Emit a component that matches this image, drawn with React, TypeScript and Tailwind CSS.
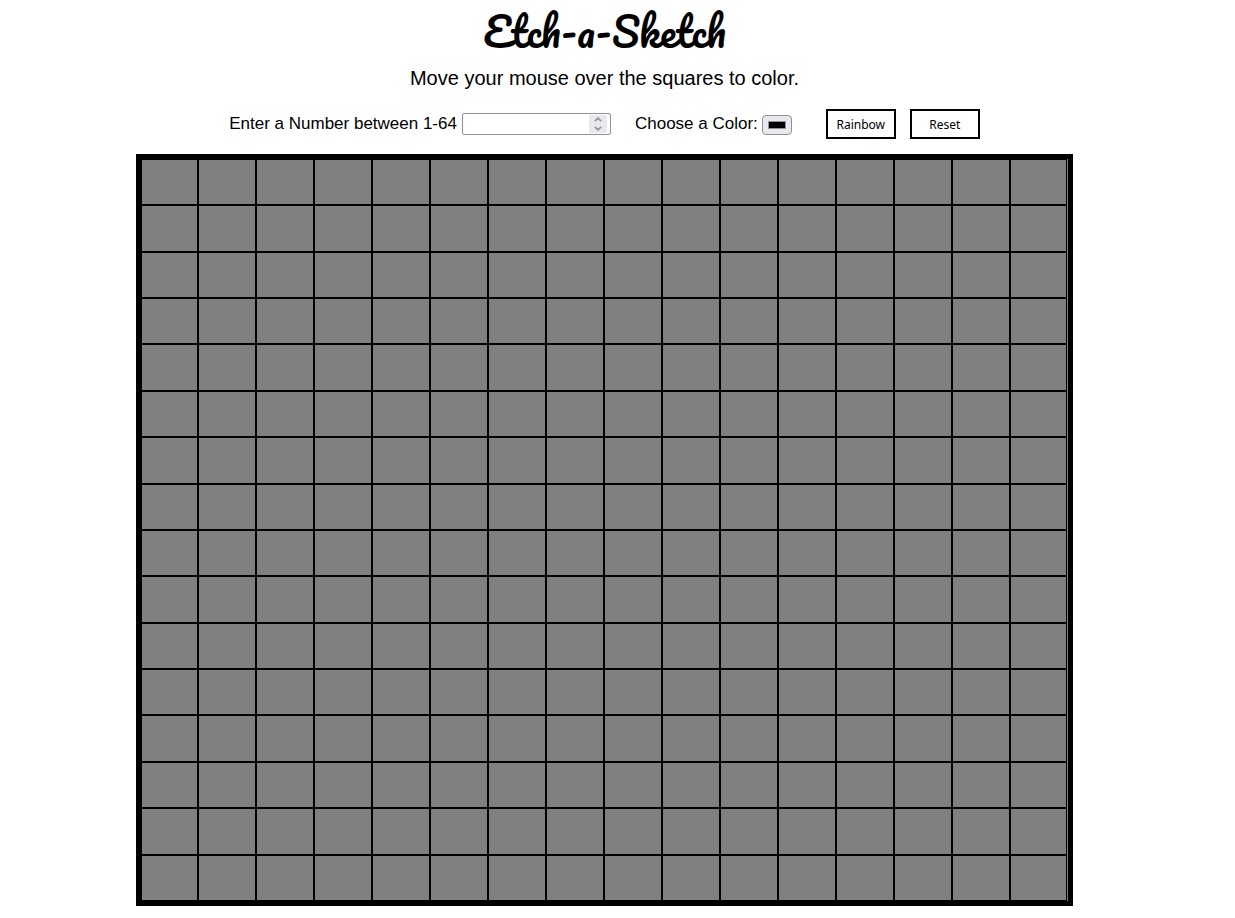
import { useState } from "react";

const DEFAULT_SIZE = 16;

export default function App() {
  const [count, setCount] = useState("");
  const [color, setColor] = useState("#000000");
  const [rainbow, setRainbow] = useState(false);
  const [painted, setPainted] = useState<Record<number, string>>({});

  const paint = (index: number) => {
    const next = rainbow ? `hsl(${Math.floor(Math.random() * 360)} 90% 50%)` : color;
    setPainted((current) => ({ ...current, [index]: next }));
  };

  const step = (delta: number) => {
    setCount(String(Math.min(64, Math.max(1, Number(count) + delta))));
  };

  return (
    <div className="flex flex-col items-center bg-white pr-[26px] pb-3 font-['Liberation_Sans',Arial,sans-serif] text-black">
      <h1 className="font-['Pacifico',cursive] text-[40px] leading-[62px] font-normal">
        Etch-a-Sketch
      </h1>
      <p className="mt-0.5 text-[20px] leading-7">Move your mouse over the squares to color.</p>

      <div className="mt-[17px] flex h-[30px] items-center text-[17px] leading-5">
        <label htmlFor="size" className="mr-[5px]">
          Enter a Number between 1-64
        </label>
        <div className="flex h-[22px] w-[149px] items-center rounded-xs border border-[#8f8f9d] pr-[3px]">
          <input
            id="size"
            type="number"
            min={1}
            max={64}
            value={count}
            onChange={(e) => setCount(e.target.value)}
            className="h-full min-w-0 flex-1 [appearance:textfield] px-1 text-[13px] outline-none"
          />
          <div className="flex h-[18px] w-[18px] flex-col bg-[#e9e9ed] text-[#8f8f9d]">
            <button type="button" aria-label="Increase" onClick={() => step(1)} className="flex flex-1 items-center justify-center">
              <svg width="8" height="5" viewBox="0 0 8 5" fill="none" stroke="currentColor" strokeWidth="1.6">
                <path d="M0.8 4.2 4 1.2 7.2 4.2" />
              </svg>
            </button>
            <button type="button" aria-label="Decrease" onClick={() => step(-1)} className="flex flex-1 items-center justify-center">
              <svg width="8" height="5" viewBox="0 0 8 5" fill="none" stroke="currentColor" strokeWidth="1.6">
                <path d="M0.8 0.8 4 3.8 7.2 0.8" />
              </svg>
            </button>
          </div>
        </div>

        <label htmlFor="color" className="mr-1 ml-6">
          Choose a Color:
        </label>
        <input
          id="color"
          type="color"
          value={color}
          onChange={(e) => setColor(e.target.value)}
          className="mt-px h-5 w-[30px] appearance-none rounded-[4px] border border-[#8f8f9d] bg-[#e9e9ed] px-[5px] py-[5px] [&::-webkit-color-swatch]:rounded-none [&::-webkit-color-swatch]:border [&::-webkit-color-swatch]:border-[#8f8f9d] [&::-webkit-color-swatch-wrapper]:p-0"
        />

        <div className="ml-[34px] flex gap-[14px] font-['Noto_Sans',Tahoma,sans-serif] text-[12px]">
          <button type="button" onClick={() => setRainbow(!rainbow)} className="h-[30px] w-[70px] border-2 border-black bg-white pt-px">
            Rainbow
          </button>
          <button type="button" onClick={() => setPainted({})} className="h-[30px] w-[70px] border-2 border-black bg-white pt-px">
            Reset
          </button>
        </div>
      </div>

      <div className="mt-[15px] grid aspect-[937/752] w-[77.5%] grid-cols-[57fr_repeat(14,58fr)_57fr] grid-rows-[repeat(16,1fr)] border-5 border-black bg-[#808080] pr-px">
        {Array.from({ length: DEFAULT_SIZE * DEFAULT_SIZE }, (_, i) => (
          <div
            key={i}
            onMouseEnter={() => paint(i)}
            className="border border-black"
            style={{ backgroundColor: painted[i] }}
          />
        ))}
      </div>
    </div>
  );
}
